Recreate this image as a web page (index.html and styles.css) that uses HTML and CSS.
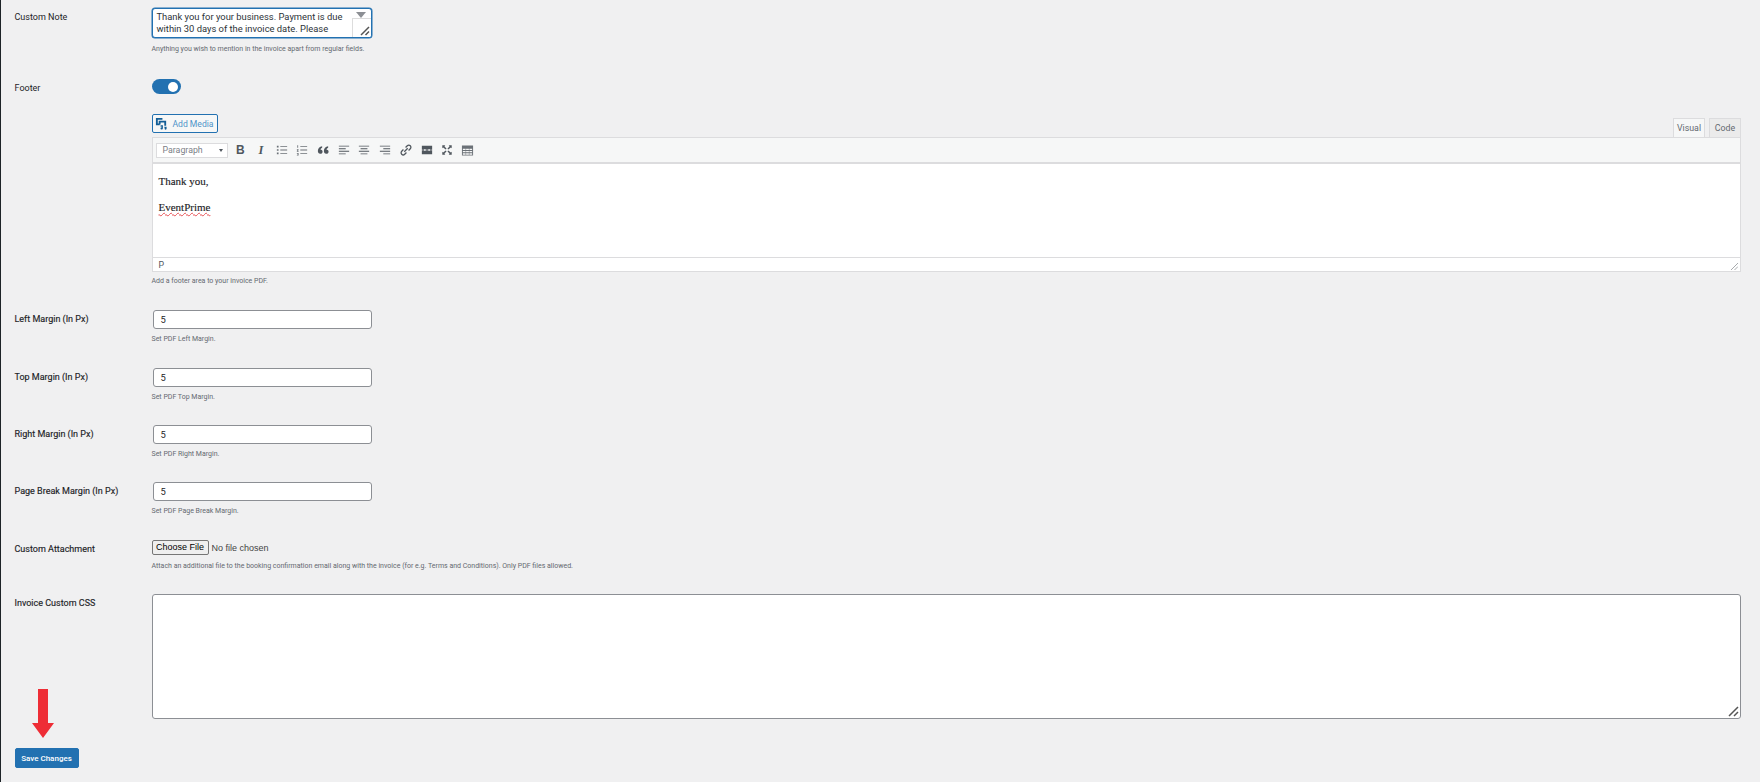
FILE: index.html
```html
<!DOCTYPE html>
<html lang="en">
<head>
  <meta charset="UTF-8" />
  <title>Invoice Settings</title>
  <link rel="stylesheet" href="styles.css">
</head>
<body>
  <span class="side-mark"></span>
  <div class="wrap">
    <!-- Custom note -->
    <div class="row row-note">
      <label class="label">Custom Note</label>
      <div class="field">
        <div class="note-box">
          <div class="note-text">Thank you for your business. Payment is due within 30 days of the invoice date. Please</div>
          <span class="note-arrow"></span>
          <span class="note-corner">
            <svg width="10" height="10" viewBox="0 0 10 10"><path d="M1 9 9 1M5.500 9 9 5.500" stroke="#555" stroke-width="1.500" fill="none"/></svg>
          </span>
        </div>
        <p class="help help-wide">Anything you wish to mention in the invoice apart from regular fields.</p>
      </div>
    </div>

    <!-- Footer editor -->
    <div class="row row-footer">
      <label class="label">Footer</label>
      <div class="field">
        <div class="toggle"><span class="knob"></span></div>
        <div class="editor-head">
          <button class="add-media">
            <svg width="13" height="13" viewBox="0 0 14 14" fill="#135e96"><path d="M1 1h7v2H3v4h2v2H1zM4 4h8v5.500h-2V6H6v2H4zM6 9h2.500v3.200a1.300 1.300 0 1 1-1-1.200V10.500H6zM10 10.500h2.500v2a1.100 1.100 0 1 1-.8-1h-1.700z"/></svg>
            Add Media
          </button>
          <div class="tabs">
            <span class="tab tab-active">Visual</span>
            <span class="tab">Code</span>
          </div>
        </div>
        <div class="editor">
          <div class="toolbar">
            <div class="format-select">Paragraph<span class="caret"></span></div>
            <div class="tools">
              <span class="tool tool-b">B</span>
              <span class="tool tool-i">I</span>
              <span class="tool"><svg width="12" height="12" viewBox="0 0 14 14" fill="#6b7177"><path d="M1 2h2v2H1zM5 2.500h8v1H5zM1 6h2v2H1zM5 6.500h8v1H5zM1 10h2v2H1zM5 10.500h8v1H5z"/></svg></span>
              <span class="tool"><svg width="12" height="12" viewBox="0 0 14 14" fill="#6b7177"><path d="M1.500 1.500h1v3h-1zM1 6h2v1L2 8h1v1H1V8l1-1H1zM1 10.500h2v3H1v-.8h1.200v-.4H1.300v-.6h.9v-.4H1zM5 2.500h8v1H5zM5 6.500h8v1H5zM5 10.500h8v1H5z"/></svg></span>
              <span class="tool"><svg width="12" height="12" viewBox="0 0 14 14" fill="#50575e"><path d="M6 2.500v2C4.500 5 4.200 6 4.200 6.800 6 6.500 6.500 8 6.500 9S5.600 11.500 3.800 11.500 1 10 1 8.300C1 5 3 3 6 2.500zM13 2.500v2c-1.500.5-1.800 1.500-1.800 2.300 1.800-.3 2.300 1.200 2.300 2.200s-.9 2.500-2.700 2.500S8 10 8 8.300C8 5 10 3 13 2.500z"/></svg></span>
              <span class="tool"><svg width="12" height="12" viewBox="0 0 14 14" fill="#50575e"><path d="M1 2h12v1H1zM1 5h8v1H1zM1 8h12v1H1zM1 11h8v1H1z"/></svg></span>
              <span class="tool"><svg width="12" height="12" viewBox="0 0 14 14" fill="#50575e"><path d="M1 2h12v1H1zM3 5h8v1H3zM1 8h12v1H1zM3 11h8v1H3z"/></svg></span>
              <span class="tool"><svg width="12" height="12" viewBox="0 0 14 14" fill="#50575e"><path d="M1 2h12v1H1zM5 5h8v1H5zM1 8h12v1H1zM5 11h8v1H5z"/></svg></span>
              <span class="tool"><svg width="12" height="12" viewBox="0 0 14 14" fill="none" stroke="#50575e" stroke-width="1.500"><path d="M5 9 9 5M6.500 4l2-2a2.300 2.300 0 0 1 3.500 3.500l-2 2M7.500 10l-2 2A2.300 2.300 0 0 1 2 8.500l2-2"/></svg></span>
              <span class="tool"><svg width="12" height="12" viewBox="0 0 14 14" fill="#50575e"><path d="M1 2h12v4H1zM1 6.500h2.500v1H1zM5.500 6.500h3v1h-3zM10.500 6.500H13v1h-2.500zM1 8h12v4H1z"/></svg></span>
              <span class="tool"><svg width="12" height="12" viewBox="0 0 14 14" fill="#50575e"><path d="M1.500 1.500h3.500L4 2.500 6.500 5.500l-1 1L2.500 4l-1 1zM12.500 1.500V5l-1-1-3 2.500-1-1L10 2.500l-1-1zM1.500 12.500V9l1 1 3-2.500 1 1L4 11.500l1 1zM12.500 12.500H9l1-1L7.500 8.500l1-1 3 2.500 1-1z"/></svg></span>
              <span class="tool"><svg width="13" height="13" viewBox="0 0 14 14" fill="#6b7177"><path d="M1 1.500h12v11H1zM2 5v1.500h3V5zM5.500 5v1.500h3V5zM9 5v1.500h3V5zM2 7.500V9h3V7.500zM5.500 7.500V9h3V7.500zM9 7.500V9h3V7.500zM2 10v1.500h3V10zM5.500 10v1.500h3V10zM9 10v1.500h3V10z" fill-rule="evenodd"/></svg></span>
            </div>
          </div>
          <div class="editor-body">
            <p>Thank you,</p>
            <p><span class="misspelt">EventPrime</span></p>
          </div>
          <div class="statusbar">
            <span>P</span>
            <svg class="grip" width="7" height="7" viewBox="0 0 7 7"><path d="M0 7 7 0M3.500 7 7 3.500" stroke="#a7aaad" fill="none"/></svg>
          </div>
        </div>
        <p class="help help-footer">Add a footer area to your invoice PDF.</p>
      </div>
    </div>

    <!-- Margins -->
    <div class="row row-left">
      <label class="label label-bold">Left Margin (In Px)</label>
      <div class="field">
        <div class="num-input">5</div>
        <p class="help">Set PDF Left Margin.</p>
      </div>
    </div>
    <div class="row">
      <label class="label label-bold">Top Margin (In Px)</label>
      <div class="field">
        <div class="num-input">5</div>
        <p class="help">Set PDF Top Margin.</p>
      </div>
    </div>
    <div class="row">
      <label class="label label-bold">Right Margin (In Px)</label>
      <div class="field">
        <div class="num-input">5</div>
        <p class="help">Set PDF Right Margin.</p>
      </div>
    </div>
    <div class="row row-page">
      <label class="label label-bold">Page Break Margin (In Px)</label>
      <div class="field">
        <div class="num-input">5</div>
        <p class="help">Set PDF Page Break Margin.</p>
      </div>
    </div>

    <!-- Attachment -->
    <div class="row row-attach">
      <label class="label label-bold">Custom Attachment</label>
      <div class="field">
        <div class="file-line"><span class="file-btn">Choose File</span><span class="file-name">No file chosen</span></div>
        <p class="help help-wide">Attach an additional file to the booking confirmation email along with the invoice (for e.g. Terms and Conditions). Only PDF files allowed.</p>
      </div>
    </div>

    <!-- Custom CSS -->
    <div class="row row-css">
      <label class="label label-bold">Invoice Custom CSS</label>
      <div class="field">
        <div class="css-box">
          <svg class="css-grip" width="11" height="11" viewBox="0 0 11 11"><path d="M1 10 10 1M6 10 10 6" stroke="#555" stroke-width="1.500" fill="none"/></svg>
        </div>
      </div>
    </div>

    <button class="save-btn">Save Changes</button>
  </div>

  <svg class="red-arrow" width="22" height="49" viewBox="0 0 22 49"><path d="M6 0h10v34h6L11 49 0 34h6z" fill="#ee2d36"/></svg>
</body>
</html>
```

FILE: styles.css
```css
* { box-sizing: border-box; }
html, body { margin: 0; height: 782px; overflow: hidden; }
body { background: #f0f0f1; font-family: Roboto, "Noto Sans", sans-serif; color: #1d2327; border-left: 1.500px solid #1d2327; position: relative; }
.side-mark { position: absolute; left: -1.500px; top: 82px; width: 1.500px; height: 21px; background: linear-gradient(#2271b1 6px, #f0f0f1 6px, #f0f0f1 15px, #2271b1 15px); }
.wrap { padding: 8px 19px 0 13.500px; }

.row { display: grid; grid-template-columns: 137px 1fr; padding-bottom: 22px; }
.row-note { padding-bottom: 24px; }
.row-footer { padding-bottom: 23px; }
.row-left { padding-bottom: 23px; }
.row-page { padding-bottom: 23px; }
.row-attach { padding-bottom: 22px; }
.row-css { padding-bottom: 29px; }
.label { font-size: 9px; line-height: 14px; padding-top: 2px; }
.label-bold { -webkit-text-stroke: 0.150px #1d2327; }
.field { min-width: 0; }
.help { margin: 5px 0 0; font-size: 7px; line-height: 11px; color: #646970; }
.help-wide { margin-top: 6px; }
.help-footer { margin-top: 4px; }

/* Note */
.note-box { position: relative; width: 220px; height: 30px; background: #fff; border: 1.500px solid #2271b1; border-radius: 3px; box-shadow: 0 0 0 0.500px #2271b1; overflow: hidden; }
.note-text { width: 205px; padding: 2px 4px 0; font-size: 9.400px; line-height: 12px; color: #2c3338; }
.note-arrow { position: absolute; top: 3px; right: 5px; border: 5px solid transparent; border-top: 6px solid #8c8f94; border-bottom: 0; }
.note-corner { position: absolute; right: 0; bottom: 0; width: 19px; height: 19px; background: #fff; border: 1px solid #ddd; border-width: 1px 0 0 1px; display: flex; align-items: flex-end; justify-content: flex-end; }
.note-corner svg { display: block; margin: 0 1px 1px 0; }

/* Toggle */
.toggle { width: 29px; height: 15px; border-radius: 8px; background: #2271b1; position: relative; }
.knob { position: absolute; right: 3px; top: 2.500px; width: 10px; height: 10px; border-radius: 50%; background: #fff; }

/* Editor */
.editor-head { display: flex; justify-content: space-between; align-items: flex-start; height: 23px; margin-top: 20px; }
.add-media { height: 19px; width: 66px; padding: 0; display: flex; align-items: center; justify-content: center; gap: 4px; font: 8.600px Roboto, sans-serif; color: #4f94c9; background: #f6f7f7; border: 1px solid #2271b1; border-radius: 2px; }
.tabs { display: flex; gap: 4px; margin-top: 4px; position: relative; z-index: 1; }
.tab { height: 19px; width: 32px; font-size: 8.800px; line-height: 18px; text-align: center; color: #646970; background: #ebebeb; border: 1px solid #dcdcde; border-bottom: 0; }
.tab-active { background: #f6f7f7; }
.editor { border: 1px solid #dcdcde; background: #fff; }
.toolbar { height: 26px; display: flex; align-items: center; gap: 2.500px; padding-left: 3px; background: #f6f7f7; border-bottom: 2px solid #dcdcde; }
.format-select { position: relative; width: 72px; height: 15px; padding-left: 6px; font-size: 8.800px; line-height: 13px; color: #7b8087; background: #fff; border: 1px solid #dcdcde; }
.caret { position: absolute; right: 4px; top: 5px; border: 2.500px solid transparent; border-top: 3px solid #50575e; border-bottom: 0; }
.tools { display: flex; }
.tool { width: 20.700px; height: 16px; display: flex; align-items: center; justify-content: center; color: #50575e; }
.tool-b { font: bold 12px "Liberation Sans", sans-serif; }
.tool-i { font: italic bold 12.500px "Liberation Serif", serif; }
.editor-body { height: 93px; padding: 9px 6px 0; font: 11px/16px "Liberation Serif", serif; -webkit-text-stroke: 0.150px #1d2327; }
.editor-body p { margin: 0 0 10px; }
.misspelt { text-decoration: underline wavy #e65054 0.500px; text-underline-offset: 1px; }
.statusbar { height: 14px; border-top: 1px solid #dcdcde; display: flex; align-items: center; justify-content: space-between; padding: 0 2px 0 6px; font-size: 8.800px; color: #50575e; }
.grip { align-self: flex-end; margin-bottom: 1px; }

/* Inputs */
.num-input { width: 219px; height: 19px; margin-left: 1px; padding-left: 7px; font-size: 9.400px; line-height: 18px; background: #fff; border: 1px solid #8c8f94; border-radius: 3px; }
.file-line { display: flex; align-items: center; height: 15px; font: 9px "Liberation Sans", sans-serif; }
.file-btn { height: 15px; width: 57px; line-height: 13px; text-align: center; color: #000; background: #efefef; border: 1px solid #767676; border-radius: 2px; margin-right: 3px; white-space: nowrap; }
.file-name { color: #444; }
.css-box { position: relative; height: 125px; background: #fff; border: 1px solid #8c8f94; border-radius: 3px; }
.css-grip { position: absolute; right: 1px; bottom: 1px; }

/* Save */
.save-btn { display: block; width: 64px; height: 20px; padding: 0; font: 500 8px Roboto, sans-serif; color: #fff; background: #2271b1; border: 1px solid #2271b1; border-radius: 2px; }

.red-arrow { position: absolute; left: 30.500px; top: 689px; }
```
